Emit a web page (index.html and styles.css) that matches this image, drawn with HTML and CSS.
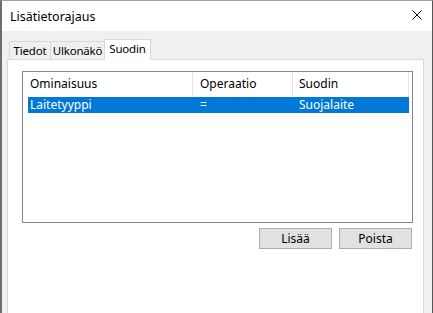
FILE: index.html
```html
<!DOCTYPE html>
<html lang="fi">
  <head>
    <meta charset="UTF-8" />
    <title>Lisätietorajaus</title>
    <link rel="stylesheet" href="styles.css">
  </head>
  <body>
    <div class="ikkuna">
      <div class="otsikko">
        <span>Lisätietorajaus</span>
        <svg class="sulje" width="10" height="10" viewBox="0 0 10 10">
          <path d="M0.5 0.5 L9.5 9.5 M9.5 0.5 L0.5 9.5" stroke="#000" stroke-width="1" fill="none" />
        </svg>
      </div>

      <div class="sisalto">
        <!-- Välilehdet -->
        <div class="valilehdet">
          <div class="valilehti tiedot">Tiedot</div>
          <div class="valilehti ulkonako">Ulkonäkö</div>
          <div class="valilehti valittu">Suodin</div>
        </div>

        <div class="paneeli">
          <div class="lista">
            <div class="rivi otsake">
              <div class="sarake s1">Ominaisuus</div>
              <div class="sarake s2">Operaatio</div>
              <div class="sarake s3">Suodin</div>
            </div>
            <div class="rivi valittu-rivi">
              <div class="sarake s1">Laitetyyppi</div>
              <div class="sarake s2">=</div>
              <div class="sarake s3">Suojalaite</div>
            </div>
          </div>
          <div class="painikkeet">
            <button>Lisää</button>
            <button>Poista</button>
          </div>
        </div>
      </div>
    </div>
  </body>
</html>
```

FILE: styles.css
```css
body {
  margin: 0;
  padding: 0;
  font-family: "Noto Sans", Arial, sans-serif;
  font-size: 12px;
  background-color: #fff;
}
.ikkuna {
  width: 433px;
  height: 313px;
  box-sizing: border-box;
  border-left: 2px solid #6e6e6e;
  border-right: 1px solid #555;
  border-top: 1px solid #9aa;
  overflow: hidden;
  background-color: #f0f0f0;
}
.otsikko {
  height: 30px;
  background-color: #fff;
  display: flex;
  align-items: center;
  justify-content: space-between;
  padding: 0 10px 0 8px;
  color: #000;
}
.otsikko span {
  font-size: 12.5px;
}
.sulje {
  margin-bottom: 2px;
}
.sisalto {
  padding: 7px 8px 0 5px;
}
.valilehdet {
  display: flex;
  align-items: flex-end;
  padding-left: 2px;
  height: 21px;
}
.valilehti {
  height: 18px;
  line-height: 17px;
  text-align: center;
  font-size: 11.5px;
  letter-spacing: -0.2px;
  border: 1px solid #d9d9d9;
  border-bottom: none;
  margin-right: -1px;
  box-sizing: border-box;
  white-space: nowrap;
}
.tiedot {
  width: 42px;
}
.ulkonako {
  width: 55px;
}
.valilehti.valittu {
  width: 47px;
  height: 21px;
  line-height: 18px;
  background-color: #fff;
  position: relative;
  top: 1px;
}
.paneeli {
  background-color: #fff;
  border: 1px solid #d9d9d9;
  height: 260px;
  padding: 11px 10px 0 14px;
}
.lista {
  border: 1px solid #828790;
  height: 150px;
  padding: 0 3px 0 5px;
}
.rivi {
  display: flex;
}
.sarake {
  padding-left: 2px;
  box-sizing: border-box;
}
.otsake {
  height: 25px;
  align-items: center;
}
.otsake .sarake {
  border-right: 1px solid #e5e5e5;
  height: 25px;
  line-height: 24px;
}
.s1 {
  width: 165px;
}
.s2 {
  width: 100px;
  padding-left: 7px;
}
.s3 {
  width: 116px;
  padding-left: 6px;
}
.valittu-rivi {
  background-color: #0078d7;
  color: #fff;
  height: 16px;
  line-height: 16px;
}
.painikkeet {
  display: flex;
  justify-content: flex-end;
  gap: 7px;
  margin-top: 5px;
  padding-right: 1px;
}
.painikkeet button {
  width: 73px;
  height: 21px;
  background-color: #e1e1e1;
  border: 1px solid #adadad;
  font-family: inherit;
  font-size: 12px;
  color: #000;
  padding: 0;
}
```
